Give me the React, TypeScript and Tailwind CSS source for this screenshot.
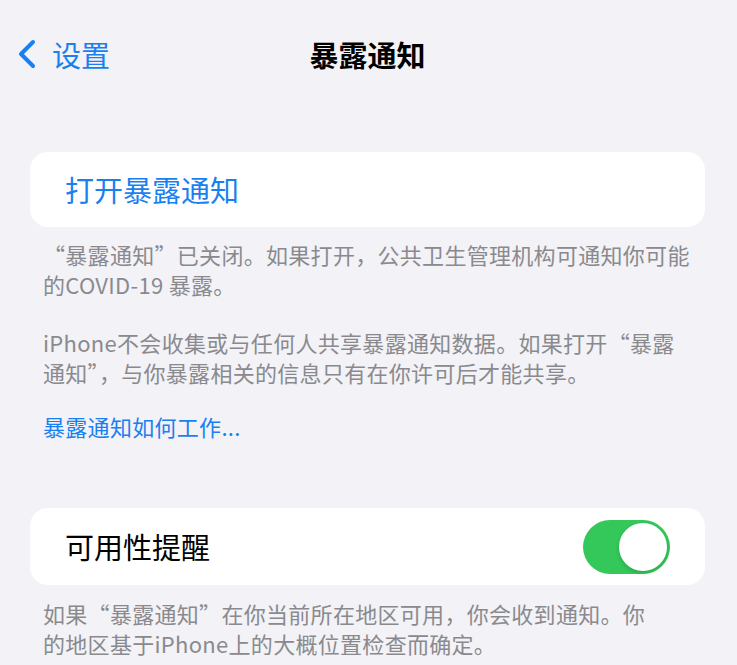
const font = { fontFamily: '"Noto Sans CJK SC", "Noto Sans", sans-serif' };

function Chevron() {
  return (
    <svg width="22" height="30" viewBox="0 0 22 30" fill="none">
      <path d="M17 3 L5 15 L17 27" stroke="#1a7ff0" strokeWidth="4" strokeLinecap="round" strokeLinejoin="round" />
    </svg>
  );
}

function Toggle() {
  return (
    <div className="w-[87px] h-[54px] rounded-full bg-[#34c759] p-[3px] flex justify-end">
      <div className="w-[48px] h-[48px] rounded-full bg-white shadow-[0_2px_4px_rgba(0,0,0,0.15)]" />
    </div>
  );
}

export default function App() {
  return (
    <div className="w-[737px] h-[665px] bg-[#f2f2f7] overflow-hidden" style={font}>
      {/* 导航栏 */}
      <div className="relative h-[108px] pt-[36px]">
        <div className="flex items-center pl-[16px] gap-[14px] h-[36px]">
          <Chevron />
          <span className="text-[29px] leading-none text-[#1a7ff0]">设置</span>
        </div>
        <div className="absolute left-0 right-0 top-[36px] h-[36px] flex items-center justify-center">
          <span className="text-[29px] leading-none font-semibold text-black pr-[2px]">暴露通知</span>
        </div>
      </div>

      <div className="pl-[30px] pr-[32px] pt-[44px]">
        <div className="bg-white rounded-[18px] h-[75px] flex items-center px-[35px]">
          <span className="text-[29px] leading-none text-[#1a7ff0]">打开暴露通知</span>
        </div>

        <div className="px-[13px] pt-[12px] text-[22px] leading-[30px] tracking-[0.3px] text-[#8a8a8e]">
          <p>
            “暴露通知”已关闭。如果打开，公共卫生管理机构可通知你可能
            <br />
            的COVID-19 暴露。
          </p>
          <p className="mt-[28px]">
            iPhone不会收集或与任何人共享暴露通知数据。如果打开“暴露
            <br />
            通知”，与你暴露相关的信息只有在你许可后才能共享。
          </p>
          <p className="mt-[24px] text-[#1a7ff0]">暴露通知如何工作...</p>
        </div>

        <div className="mt-[67px] bg-white rounded-[18px] h-[77px] flex items-center justify-between pl-[35px] pr-[35px]">
          <span className="text-[29px] leading-none text-black">可用性提醒</span>
          <Toggle />
        </div>

        <div className="px-[13px] pt-[13px] text-[22px] leading-[30px] tracking-[0.3px] text-[#8a8a8e]">
          <p>
            如果“暴露通知”在你当前所在地区可用，你会收到通知。你
            <br />
            的地区基于iPhone上的大概位置检查而确定。
          </p>
        </div>
      </div>
    </div>
  );
}
